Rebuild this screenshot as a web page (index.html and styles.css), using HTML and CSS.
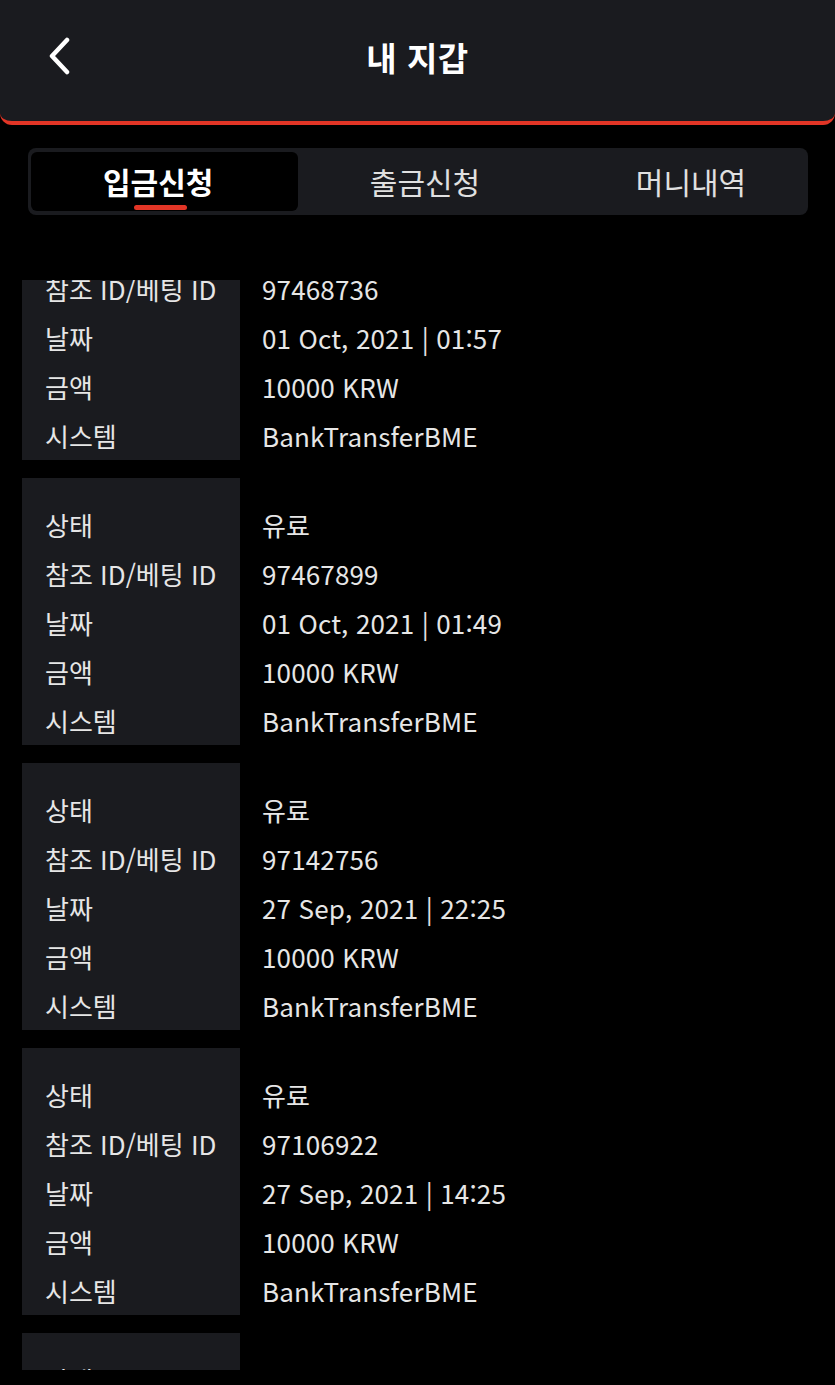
FILE: index.html
```html
<!DOCTYPE html>
<html lang="ko">
<head>
<meta charset="utf-8">
<link rel="stylesheet" href="styles.css">
</head>
<body>
<header class="topbar">
  <a class="back" aria-label="back">
    <svg width="26" height="38" viewBox="0 0 26 38"><path d="M21 3 L6 19 L21 35" fill="none" stroke="#fff" stroke-width="4.5" stroke-linecap="round" stroke-linejoin="round"/></svg>
  </a>
  <h1 class="title">내 지갑</h1>
</header>

<nav class="tabs">
  <div class="tab active"><span>입금신청</span></div>
  <div class="tab"><span>출금신청</span></div>
  <div class="tab"><span>머니내역</span></div>
</nav>

<div class="viewport">
  <div class="list">
    <div class="card">
      <div class="row"><span class="k">상태</span><span class="v">유료</span></div>
      <div class="row"><span class="k">참조 ID/베팅 ID</span><span class="v">97468736</span></div>
      <div class="row"><span class="k">날짜</span><span class="v">01 Oct, 2021 | 01:57</span></div>
      <div class="row"><span class="k">금액</span><span class="v">10000 KRW</span></div>
      <div class="row"><span class="k">시스템</span><span class="v">BankTransferBME</span></div>
    </div>
    <div class="card">
      <div class="row"><span class="k">상태</span><span class="v">유료</span></div>
      <div class="row"><span class="k">참조 ID/베팅 ID</span><span class="v">97467899</span></div>
      <div class="row"><span class="k">날짜</span><span class="v">01 Oct, 2021 | 01:49</span></div>
      <div class="row"><span class="k">금액</span><span class="v">10000 KRW</span></div>
      <div class="row"><span class="k">시스템</span><span class="v">BankTransferBME</span></div>
    </div>
    <div class="card">
      <div class="row"><span class="k">상태</span><span class="v">유료</span></div>
      <div class="row"><span class="k">참조 ID/베팅 ID</span><span class="v">97142756</span></div>
      <div class="row"><span class="k">날짜</span><span class="v">27 Sep, 2021 | 22:25</span></div>
      <div class="row"><span class="k">금액</span><span class="v">10000 KRW</span></div>
      <div class="row"><span class="k">시스템</span><span class="v">BankTransferBME</span></div>
    </div>
    <div class="card">
      <div class="row"><span class="k">상태</span><span class="v">유료</span></div>
      <div class="row"><span class="k">참조 ID/베팅 ID</span><span class="v">97106922</span></div>
      <div class="row"><span class="k">날짜</span><span class="v">27 Sep, 2021 | 14:25</span></div>
      <div class="row"><span class="k">금액</span><span class="v">10000 KRW</span></div>
      <div class="row"><span class="k">시스템</span><span class="v">BankTransferBME</span></div>
    </div>
    <div class="card">
      <div class="row"><span class="k">상태</span><span class="v">유료</span></div>
      <div class="row"><span class="k">참조 ID/베팅 ID</span><span class="v">97100000</span></div>
      <div class="row"><span class="k">날짜</span><span class="v">27 Sep, 2021 | 10:00</span></div>
      <div class="row"><span class="k">금액</span><span class="v">10000 KRW</span></div>
      <div class="row"><span class="k">시스템</span><span class="v">BankTransferBME</span></div>
    </div>
  </div>
</div>
</body>
</html>
```

FILE: styles.css
```css
* { box-sizing: border-box; }
html, body { margin: 0; padding: 0; background: #000; }
body {
  width: 835px;
  height: 1385px;
  overflow: hidden;
  font-family: "Noto Sans CJK KR", "Noto Sans", sans-serif;
  color: #e8e8e8;
}

.topbar {
  height: 125px;
  background: #1a1b1f;
  border-bottom: 4px solid #e23526;
  border-radius: 0 0 12px 12px;
  display: flex;
  align-items: center;
  justify-content: center;
  position: relative;
  padding-bottom: 8px;
}
.back {
  position: absolute;
  left: 46px;
  top: 37px;
  display: block;
  line-height: 0;
}
.title {
  margin: 0;
  font-size: 33px;
  font-weight: 700;
  color: #fff;
  letter-spacing: 0.5px;
}

.tabs {
  margin: 23px 27px 0 28px;
  height: 67px;
  background: #1a1b1f;
  border-radius: 8px;
  padding: 4px 3px;
  display: grid;
  grid-template-columns: 267px 252px 1fr;
}
.tab {
  display: flex;
  align-items: center;
  justify-content: center;
  font-size: 30px;
  color: #e0e0e0;
  position: relative;
  padding-bottom: 2px;
}
.tab.active {
  background: #000;
  border-radius: 6px;
  color: #fff;
  font-weight: 700;
  justify-content: flex-start;
  padding-left: 72px;
}
.tab.active::after {
  content: "";
  position: absolute;
  left: 103px;
  bottom: 1px;
  width: 53px;
  height: 5px;
  border-radius: 3px;
  background: #e23526;
}
.tab:nth-child(2) { padding-left: 2px; }
.tab:nth-child(3) { padding-left: 27px; }

.viewport {
  margin-top: 65px;
  height: 1090px;
  overflow: hidden;
}
.list {
  margin-top: -87px;
  padding: 0 22px;
  display: flex;
  flex-direction: column;
  gap: 18px;
}
.card {
  padding-top: 22px;
  background: linear-gradient(to right, #1a1b1f 0, #1a1b1f 218px, transparent 218px);
}
.row {
  height: 49px;
  display: flex;
  align-items: center;
  font-size: 26px;
  line-height: 1;
}
.k {
  width: 218px;
  padding-left: 23px;
  color: #e6e6e6;
}
.v {
  padding-left: 22px;
  color: #e6e6e6;
  letter-spacing: 0.15px;
}
```
